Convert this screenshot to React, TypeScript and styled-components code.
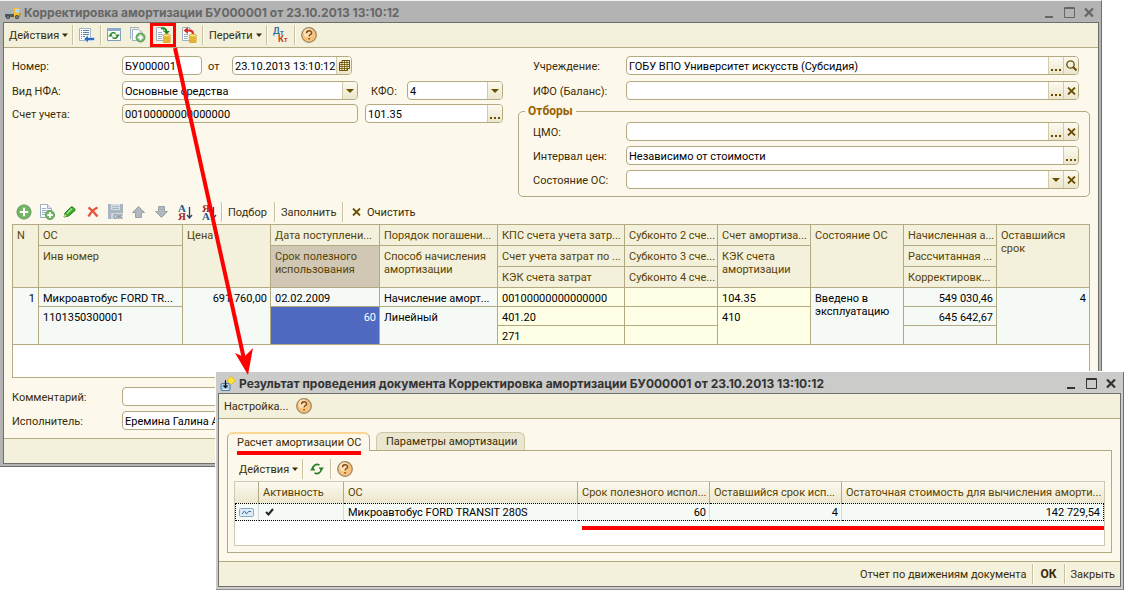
import React from "react";
import styled, { createGlobalStyle, css } from "styled-components";

const c = {
  line: "#b3aa82",
  bar: "#f3f0dc",
  body: "#fcf9ec",
  text: "#3b2c05",
  head: "#594304",
  brown: "#6b4e00",
  dark: "#6f6f6b",
  red: "#ff0000",
};

const Global = createGlobalStyle`
  *, *::before, *::after { box-sizing: border-box; }
  body { margin: 0; background: #fff; }
  body, button, input, select, table {
    font-family: Roboto, "Liberation Sans", sans-serif;
    font-size: 11px;
    line-height: 13px;
    color: ${c.text};
  }
  button { background: none; border: 0; padding: 0; margin: 0; }
  svg { display: block; flex: none; }
`;

/* ---------- windows ---------- */

const Desktop = styled.main`
  position: relative;
  display: grid;
  grid-template-columns: minmax(0, 1fr);
  align-items: start;
  min-width: 900px;
`;

const Window = styled.section<{ $active?: boolean }>`
  grid-area: 1 / 1;
  display: flex;
  flex-direction: column;
  background: ${(p) => (p.$active ? "#cbcbc9" : "#b3b3b3")};
  border-right: 1px solid ${c.dark};
  border-bottom: 1px solid ${(p) => (p.$active ? "#8d8d8b" : c.dark)};
  padding: 0 2px 2px ${(p) => (p.$active ? "2px" : "3px")};
  margin: ${(p) => (p.$active ? "372px 0 0 216px" : "0 22px 0 0")};
  ${(p) =>
    p.$active
      ? css`
          z-index: 2;
          box-shadow: -1px -1px 0 #fff;
        `
      : css`
          border-top: 1px solid #eef2ef;
        `}
`;

const TitleBar = styled.header<{ $active?: boolean }>`
  display: flex;
  align-items: center;
  gap: 3px;
  height: 21px;
  padding-left: 2px;
  padding-top: 2px;
  color: ${(p) => (p.$active ? "#333333" : "#666666")};
`;

const Title = styled.h1`
  flex: 1;
  margin: 0;
  font-family: Inter, Roboto, sans-serif;
  font-size: 12px;
  font-weight: 700;
  line-height: 14px;
  white-space: nowrap;
`;

const WinButtons = styled.div`
  display: flex;
  color: inherit;
`;

const WinButton = styled.button`
  width: 20px;
  height: 18px;
  display: grid;
  place-items: center;
  color: inherit;
`;

const Frame = styled.div`
  display: flex;
  flex-direction: column;
  background: ${c.body};
  border: 1px solid ${c.dark};
`;

const Bar = styled.div<{ $edge?: "bottom" | "top"; $end?: boolean; $gap?: number }>`
  display: flex;
  align-items: center;
  height: ${(p) => (p.$edge ? 25 : 24)}px;
  margin-top: ${(p) => p.$gap ?? 0}px;
  ${(p) => p.$edge && css`background: ${c.bar};`}
  ${(p) => p.$edge === "bottom" && css`border-bottom: 1px solid ${c.line};`}
  ${(p) => p.$edge === "top" && css`border-top: 1px solid ${c.line};`}
  ${(p) => p.$end && css`justify-content: flex-end;`}
`;

const Sep = styled.i`
  width: 2px;
  height: 20px;
  background: linear-gradient(90deg, #c9c2a0 50%, #fffef8 50%);
`;

const IconButton = styled.button<{ $w?: number }>`
  width: ${(p) => p.$w ?? 24}px;
  height: 24px;
  display: grid;
  place-items: center;
`;

const MarkedButton = styled(IconButton)`
  border: 3px solid ${c.red};
`;

const TextButton = styled.button<{ $w?: number; $bold?: boolean; $icon?: boolean }>`
  display: flex;
  align-items: center;
  gap: ${(p) => (p.$icon ? 6 : 3)}px;
  height: 24px;
  padding: 0 ${(p) => (p.$icon ? 8 : 5)}px;
  white-space: nowrap;
  ${(p) => p.$w && css`width: ${p.$w}px;`}
  ${(p) =>
    p.$bold &&
    css`
      font-size: 12px;
      font-weight: 700;
      justify-content: center;
    `}
`;

/* ---------- form ---------- */

const Content = styled.div`
  display: flex;
  flex-direction: column;
  padding: 8px;
`;

const FormGrid = styled.div`
  display: grid;
  grid-template-columns: 506px minmax(0, 1fr);
`;

const Row = styled.div<{ $gap?: number; $inset?: boolean }>`
  display: flex;
  align-items: center;
  height: 19px;
  margin-top: ${(p) => p.$gap ?? 0}px;
  ${(p) => p.$inset && css`padding: 0 11px 0 15px;`}
`;

const Label = styled.label<{ $w: number; $pl?: number }>`
  width: ${(p) => p.$w}px;
  padding: 1px 0 0 ${(p) => p.$pl ?? 0}px;
  flex: none;
  white-space: nowrap;
`;

const Field = styled.div<{ $w?: number; $muted?: boolean; $ml?: number }>`
  display: flex;
  height: 19px;
  ${(p) => (p.$w ? css`width: ${p.$w}px;` : css`flex: 1;`)}
  margin-left: ${(p) => p.$ml ?? 0}px;
  border: 1px solid ${c.line};
  border-radius: 4px;
  background: ${(p) => (p.$muted ? c.body : "#fff")};
  overflow: hidden;
`;

const control = css`
  flex: 1;
  min-width: 0;
  width: 0;
  height: 17px;
  border: 0;
  outline: 0;
  margin: 0;
  padding: 1px 0 0 2px;
  background: transparent;
  color: #000;
`;
const Input = styled.input`
  ${control}
`;
const Select = styled.select`
  ${control}
  appearance: none;
`;

const FieldButton = styled.button`
  width: 15px;
  height: 17px;
  display: grid;
  place-items: center;
  border-left: 1px solid #d3cba8;
  background: linear-gradient(#fcfaf0, #ece6cc);
`;

const Group = styled.fieldset`
  margin: 5px 0 0;
  padding: 4px 10px 7px 14px;
  min-width: 0;
  border: 1px solid ${c.line};
  border-radius: 5px;
`;

const Legend = styled.legend`
  margin-left: -8px;
  padding: 0 3px;
  height: 13px;
  font-size: 12px;
  font-weight: 700;
  color: #996000;
`;

/* ---------- main table ---------- */

const TableBox = styled.div`
  border: 1px solid ${c.line};
  background: #fff;
  padding-bottom: 32px;
`;

const Grid = styled.table`
  width: 100%;
  table-layout: fixed;
  border-collapse: separate;
  border-spacing: 0;
  tr > .last { border-right: 0; }
`;

const Th = styled.th<{ $sel?: boolean }>`
  height: 21px;
  padding: 4px 0 0 4px;
  border: solid ${c.line};
  border-width: 0 1px 1px 0;
  background: ${(p) => (p.$sel ? "#d0c8b4" : c.bar)};
  color: ${c.head};
  font-weight: 400;
  text-align: left;
  vertical-align: top;
  white-space: nowrap;
`;

const Td = styled.td<{ $bg?: "account" | "selected"; $num?: boolean }>`
  height: 19px;
  padding: 4px 3px 0 4px;
  border: solid ${c.line};
  border-width: 0 1px 1px 0;
  background: ${(p) =>
    p.$bg === "account" ? "#ffffe6" : p.$bg === "selected" ? "#5069c1" : "#f5faf7"};
  color: ${(p) => (p.$bg === "selected" ? "#fff" : "#000")};
  text-align: ${(p) => (p.$num ? "right" : "left")};
  vertical-align: top;
  white-space: nowrap;
`;

/* ---------- result window ---------- */

const Tabs = styled.div`
  display: flex;
  height: 19px;
  margin: 13px 8px 0;
  position: relative;
  z-index: 1;
`;

const Tab = styled.button<{ $on?: boolean }>`
  position: relative;
  height: ${(p) => (p.$on ? 19 : 18)}px;
  width: ${(p) => (p.$on ? 143 : 149)}px;
  margin-right: 6px;
  padding: 0 9px;
  text-align: ${(p) => (p.$on ? "left" : "center")};
  white-space: nowrap;
  border: 1px solid ${(p) => (p.$on ? c.line : "#cfc8a8")};
  border-top: ${(p) => (p.$on ? "2px solid #fbd592" : "1px solid #cfc8a8")};
  border-bottom: 0;
  border-radius: 6px 6px 0 0;
  background: ${(p) => (p.$on ? c.body : "#ebe6d0")};
`;

const TabMark = styled.i`
  position: absolute;
  left: 9px;
  right: 8px;
  top: 17px;
  height: 4px;
  background: ${c.red};
`;

const Panel = styled.div`
  margin: -1px 8px 8px;
  padding: 6px;
  border: 1px solid ${c.line};
`;

const ResultBox = styled.div`
  height: 65px;
  border: 1px solid #cdc9b3;
  background: #fff;
`;

const RTh = styled.th`
  height: 21px;
  padding: 0 0 0 4px;
  border-right: 1px solid ${c.line};
  background: linear-gradient(#fcfaf0, #ece6cc);
  color: ${c.head};
  font-weight: 400;
  text-align: left;
  white-space: nowrap;
`;

const RTd = styled.td<{ $num?: boolean; $tick?: boolean }>`
  height: 18px;
  padding: 0 3px 0 ${(p) => (p.$tick ? 6 : 4)}px;
  border-top: 1px dotted #000;
  border-bottom: 1px dotted #000;
  border-right: 1px solid #d5dbe0;
  background: #f5faf7;
  color: #000;
  text-align: ${(p) => (p.$num ? "right" : "left")};
  white-space: nowrap;
  &:first-child { border-left: 1px dotted #000; padding-left: 3px; }
  &:last-child { border-right: 1px dotted #000; }
`;

const ResultMark = styled.i`
  display: block;
  height: 4px;
  margin: 5px 0 0 347px;
  background: ${c.red};
`;

const Arrow = styled.svg`
  position: absolute;
  left: 170px;
  top: 47px;
  z-index: 3;
  pointer-events: none;
`;

/* ---------- icons ---------- */

const Svg = ({ children, w = 16, h = 16 }: { children: React.ReactNode; w?: number; h?: number }) => (
  <svg width={w} height={h} viewBox={`0 0 ${w} ${h}`} fill="none" aria-hidden="true">
    {children}
  </svg>
);

const Caret = ({ w = 6 }: { w?: number }) =>
  w === 6 ? (
    <Svg w={6} h={4}><path d="M0 .5h6L3 4z" fill={c.text} /></Svg>
  ) : (
    <Svg w={8} h={4}><path d="M0 0h8L4 4z" fill={c.brown} /></Svg>
  );
const Dots = () => (
  <Svg w={10} h={13}><path d="M0 10h2v2H0zM4 10h2v2H4zM8 10h2v2H8z" fill={c.brown} /></Svg>
);
const Cross = () => (
  <Svg w={9} h={8}><path d="M1 .5l7 7M8 .5l-7 7" stroke={c.brown} strokeWidth="1.800" /></Svg>
);
const Magnifier = () => (
  <Svg w={11} h={11}>
    <circle cx="4.500" cy="4.500" r="3.700" stroke={c.brown} strokeWidth="1.300" />
    <path d="M7 7l3.500 3.500" stroke={c.brown} strokeWidth="2" />
  </Svg>
);
const Calendar = () => (
  <Svg w={11} h={11}>
    <path d="M3 .5h7.500v8H8.500v2h-8v-8H3z" stroke={c.brown} fill="#fff8dc" />
    <path d="M.5 4.500h10M.5 6.500h10M.5 8.500h8M3 2.500h7.500M3 2v8.500M5.500.5v10M8 .5v10" stroke={c.brown} strokeWidth=".8" />
  </Svg>
);
const Truck = () => (
  <Svg w={16} h={14}>
    <path d="M0 8h9v3H0z" fill="#55595e" />
    <path d="M0 6h9v2H0z" fill="#9fb4c4" />
    <path d="M9 2h5.500v9H9z" fill="#f2c230" />
    <path d="M10 3h4v3.500h-4z" fill="#b8d8ef" />
    <path d="M14 7h1.500v4H14z" fill="#c4901c" />
    <circle cx="3" cy="11" r="2" fill="#3d4248" /><circle cx="12" cy="11" r="2" fill="#3d4248" />
    <circle cx="3" cy="11" r=".7" fill="#ccc" /><circle cx="12" cy="11" r=".7" fill="#ccc" />
  </Svg>
);
const ResultIcon = () => (
  <Svg>
    <rect x="1" y="7.500" width="9" height="7" rx="1" fill="#a9cdea" stroke="#4f7fa6" />
    <path d="M3 13.500h5" stroke="#e8f3fb" />
    <path d="M5.500 5v7M3.500 9.500l2 2 2-2" stroke="#111" strokeWidth="1.300" />
    <path d="M5 4.500h3" stroke="#222" strokeDasharray="1 1" />
    <path d="M11 .3l4.600 4.200L11 8.700 6.800 4.500z" fill="#ffe33a" stroke="#d3a820" strokeWidth=".7" />
  </Svg>
);
const ListArrow = () => (
  <Svg>
    <path d="M.5 1.500h11v12H.5z" fill="#fdfeff" stroke="#9fb6cc" />
    <path d="M2 3.500h1M4 3.500h6M2 5.500h1M4 5.500h6M2 7.500h1M4 7.500h6M2 9.500h1M4 9.500h2M2 11.500h1" stroke="#5f7f9f" />
    <path d="M5 12l4-4v2.500h6.500v3H9V16z" fill="#2b6bbd" stroke="#fff" strokeWidth=".5" />
  </Svg>
);
const WindowRefresh = () => (
  <Svg>
    <path d="M1.500 1.500h13v12h-13z" fill="#fdfeff" stroke="#7f9cb8" />
    <path d="M1 1h14v3H1z" fill="#8eabc7" />
    <path d="M4.500 8.500c0-3 3.500-3.500 5-2M11.500 8.500c0 3-3.500 3.500-5 2" stroke="#2c8a2c" strokeWidth="1.500" />
    <path d="M2 9.500h5L4.500 6.500zM9 7.500h5l-2.500 3z" fill="#2c8a2c" />
  </Svg>
);
const Page = () => (
  <>
    <path d="M1.500.5h7l4 4v9h-11z" fill="#fcfdfe" stroke="#9fb0c0" />
    <path d="M8.500.5v4h4" fill="#dfe8f0" stroke="#9fb0c0" />
  </>
);
const Plus = ({ x, y, r }: { x: number; y: number; r: number }) => (
  <>
    <circle cx={x} cy={y} r={r} fill="#74b566" stroke="#5c9a55" />
    <path d={`M${x - r * 0.6} ${y}h${r * 1.2}M${x} ${y - r * 0.6}v${r * 1.2}`} stroke="#fff" strokeWidth="2" />
  </>
);
const CopyDoc = () => (
  <Svg>
    <path d="M.5 12V.5h8.500" stroke="#9fb0c0" />
    <path d="M2.500 2.500h6l4 3v8h-10z" fill="#fcfdfe" stroke="#9fb0c0" />
    <Plus x={10.500} y={10.500} r={4.500} />
  </Svg>
);
const AddDoc = () => (
  <Svg>
    <Page />
    <path d="M3 4.500h4M3 6.500h7M3 8.500h4M3 10.500h3" stroke="#9ab2c8" />
    <Plus x={11} y={11} r={4.500} />
  </Svg>
);
const PlusIcon = () => <Svg><Plus x={8} y={8} r={7} /></Svg>;
const Coins = () => (
  <>
    <path d="M8 8.500v6c0 2 7.500 2 7.500 0v-6z" fill="#f5c945" />
    <ellipse cx="11.750" cy="8.500" rx="3.700" ry="1.500" fill="#ffe48a" stroke="#c58d13" strokeWidth=".7" />
    <path d="M8 10.500c0 2 7.500 2 7.500 0M8 12.500c0 2 7.500 2 7.500 0M8 14.300c0 2 7.500 2 7.500 0" stroke="#c58d13" strokeWidth=".7" />
  </>
);
const PostIcon = () => (
  <Svg>
    <Page />
    <path d="M3 5.500h4M3 7.500h5M3 9.500h4M3 11.500h4" stroke="#9ab2c8" />
    <path d="M6 1.500c3-.5 5 .5 5.500 3" stroke="#22852a" strokeWidth="2" />
    <path d="M8.500 4h6.500l-3.500 3.500z" fill="#22852a" />
    <Coins />
  </Svg>
);
const UnpostIcon = () => (
  <Svg>
    <Page />
    <path d="M3 7.500h4M3 9.500h4M3 11.500h4" stroke="#9ab2c8" />
    <path d="M5 3.500h3c3 0 4 1.500 4 4" stroke="#dd2a1c" strokeWidth="2" />
    <path d="M2.500 3.500L7 0v7z" fill="#dd2a1c" />
    <Coins />
  </Svg>
);
const DtKt = () => (
  <svg width="16" height="16" viewBox="0 0 16 16" aria-hidden="true" fontFamily="Roboto, sans-serif" fontWeight="700">
    <text x="0" y="7" fontSize="9" fill="#33719f">Д</text>
    <text x="7" y="8" fontSize="7" fill="#33719f">т</text>
    <text x="5" y="15" fontSize="9" fill="#cf3a24">К</text>
    <text x="11" y="15" fontSize="7" fill="#cf3a24">т</text>
  </svg>
);
const Help = () => (
  <svg width="16" height="16" viewBox="0 0 16 16" aria-hidden="true">
    <circle cx="8" cy="8" r="7.300" fill="#f9c27a" stroke="#9a8566" strokeWidth="1.200" />
    <circle cx="7" cy="6" r="4.500" fill="#fee0b4" />
    <path d="M5.600 6.200c0-3.400 5-3.200 5-.3 0 1.900-2.500 1.700-2.500 3.600M8.100 11v1.600" fill="none" stroke="#7d4a14" strokeWidth="1.500" />
  </svg>
);
const Pencil = () => (
  <Svg w={13} h={12}>
    <path d="M1 11l1-4 6-6c1-1 5 2 4 3.500L5.500 10z" fill="#3fae2c" stroke="#23801a" />
    <path d="M4 7.500L9 2.500" stroke="#a5e48e" strokeWidth="1.500" />
    <path d="M1 11l.7-3L4 10z" fill="#e9d9a8" />
  </Svg>
);
const RedCross = () => (
  <Svg w={12} h={12}><path d="M1.500 1.500c3 2 6 5 9 9M10.500 1.500c-4 2-7 5-9 9" stroke="#e8553f" strokeWidth="2.400" /></Svg>
);
const SaveOk = () => (
  <Svg>
    <path d="M0 0h15v15H0z" fill="#a9b6c2" />
    <path d="M3 0h9v6H3z" fill="#d5dde4" /><path d="M4 2.500h7M4 4.500h7" stroke="#a9b6c2" />
    <path d="M3 9h12v6H3z" fill="#d0d8df" />
    <text x="5" y="15" fontSize="7" fontWeight="700" fill="#8793a0">ОК</text>
  </Svg>
);
const ArrowUp = () => (
  <Svg w={13} h={12}><path d="M6.500.5l6 6h-3v5h-6v-5h-3z" fill="#b0b8be" stroke="#98a2aa" /></Svg>
);
const ArrowDown = () => (
  <Svg w={13} h={12}><path d="M6.500 11.500l6-6h-3v-5h-6v5h-3z" fill="#b0b8be" stroke="#98a2aa" /></Svg>
);
const Sort = ({ desc }: { desc?: boolean }) => (
  <svg width="16" height="17" viewBox="0 0 16 17" aria-hidden="true" fontFamily="Liberation Serif, serif" fontWeight="700" fontSize="11">
    <text x="1" y="8" fill={desc ? "#a3281e" : "#1e5f8c"}>{desc ? "Я" : "А"}</text>
    <text x="1" y="16" fill={desc ? "#1e5f8c" : "#a3281e"}>{desc ? "А" : "Я"}</text>
    <path d="M12.500 3v10M10 11l2.500 3 2.500-3" fill="none" stroke="#27455f" strokeWidth="1.300" />
  </svg>
);
const Refresh = () => (
  <Svg w={14} h={12}>
    <path d="M2.500 6.500C2.500 2.500 6 .5 9.500 2M11.500 5.500c0 4-3.500 6-7 4.500" stroke="#27802a" strokeWidth="1.700" />
    <path d="M0 7.500h5.500L2.700 4zM8.500 4.500H14L11.300 8z" fill="#27802a" />
  </Svg>
);
const RecordIcon = () => (
  <Svg w={15} h={9}>
    <rect x=".5" y=".5" width="14" height="8" rx="1" fill="#dcebf7" stroke="#8da9c2" />
    <path d="M3 6l2.500-3 2 3 2-2.500H12" stroke="#3c6c97" />
  </Svg>
);
const Tick = () => (
  <Svg w={9} h={8}><path d="M1 4l2.500 2.500L8 1" stroke="#222" strokeWidth="2" /></Svg>
);

const WindowControls = () => (
  <WinButtons>
    <WinButton aria-label="Свернуть"><Svg w={11} h={12}><path d="M1 9h8v2H1z" fill="currentColor" /></Svg></WinButton>
    <WinButton aria-label="Развернуть">
      <Svg w={11} h={11}><path d="M.5.5h10v10H.5zM0 1.500h11" stroke="currentColor" /></Svg>
    </WinButton>
    <WinButton aria-label="Закрыть окно">
      <Svg w={10} h={9}><path d="M1 .5l8 8M9 .5l-8 8" stroke="currentColor" strokeWidth="2.200" /></Svg>
    </WinButton>
  </WinButtons>
);

/* ---------- screens ---------- */

type ButtonKind = "dots" | "find" | "clear" | "caret";
const kinds: Record<ButtonKind, [string, React.ReactNode]> = {
  dots: ["Выбрать", <Dots />],
  find: ["Открыть", <Magnifier />],
  clear: ["Очистить поле", <Cross />],
  caret: ["Список", <Caret w={8} />],
};

const WideRow = (p: { id: string; label: string; value?: string; buttons: ButtonKind[]; gap?: number; inset?: boolean; labelWidth?: number }) => (
  <Row $gap={p.gap} $inset={p.inset}>
    <Label htmlFor={p.id} $w={p.labelWidth ?? 93}>{p.label}</Label>
    <Field>
      <Input id={p.id} defaultValue={p.value} />
      {p.buttons.map((b) => (
        <FieldButton key={b} aria-label={kinds[b][0]}>{kinds[b][1]}</FieldButton>
      ))}
    </Field>
  </Row>
);

const columns = [26, 144, 88, 109, 118, 127, 93, 93, 93, 93, 92];
const resultColumns = [24, 85, 234, 132, 132, 262];

const MainTable = () => (
  <TableBox>
    <Grid>
      <colgroup>{columns.map((w, i) => <col key={i} style={{ width: w }} />)}</colgroup>
      <thead>
        <tr>
          <Th rowSpan={3}>N</Th>
          <Th>ОС</Th>
          <Th rowSpan={3}>Цена</Th>
          <Th>Дата поступлени...</Th>
          <Th>Порядок погашени...</Th>
          <Th>КПС счета учета затр...</Th>
          <Th>Субконто 2 сче...</Th>
          <Th>Счет амортиза...</Th>
          <Th rowSpan={3}>Состояние ОС</Th>
          <Th>Начисленная а...</Th>
          <Th rowSpan={3} className="last">Оставшийся<br />срок</Th>
        </tr>
        <tr>
          <Th rowSpan={2}>Инв номер</Th>
          <Th rowSpan={2} $sel>Срок полезного<br />использования</Th>
          <Th rowSpan={2}>Способ начисления<br />амортизации</Th>
          <Th>Счет учета затрат по ...</Th>
          <Th>Субконто 3 сче...</Th>
          <Th rowSpan={2}>КЭК счета<br />амортизации</Th>
          <Th>Рассчитанная ...</Th>
        </tr>
        <tr>
          <Th>КЭК счета затрат</Th>
          <Th>Субконто 4 сче...</Th>
          <Th>Корректировк...</Th>
        </tr>
      </thead>
      <tbody>
        <tr>
          <Td rowSpan={3} $num>1</Td>
          <Td>Микроавтобус FORD TR...</Td>
          <Td rowSpan={3} $num>691 760,00</Td>
          <Td>02.02.2009</Td>
          <Td>Начисление аморт...</Td>
          <Td $bg="account">00100000000000000</Td>
          <Td $bg="account" />
          <Td $bg="account">104.35</Td>
          <Td rowSpan={3}>Введено в<br />эксплуатацию</Td>
          <Td $num>549 030,46</Td>
          <Td rowSpan={3} $num className="last">4</Td>
        </tr>
        <tr>
          <Td rowSpan={2}>1101350300001</Td>
          <Td rowSpan={2} $bg="selected" $num>60</Td>
          <Td rowSpan={2}>Линейный</Td>
          <Td $bg="account">401.20</Td>
          <Td $bg="account" />
          <Td rowSpan={2} $bg="account">410</Td>
          <Td $num>645 642,67</Td>
        </tr>
        <tr>
          <Td $bg="account">271</Td>
          <Td $bg="account" />
          <Td />
        </tr>
      </tbody>
    </Grid>
  </TableBox>
);

const DocumentWindow = () => (
  <Window>
    <TitleBar>
      <Truck />
      <Title>Корректировка амортизации БУ000001 от 23.10.2013 13:10:12</Title>
      <WindowControls />
    </TitleBar>
    <Frame>
      <Bar $edge="bottom">
        <TextButton $w={68}>Действия <Caret /></TextButton>
        <Sep />
        <IconButton $w={26} aria-label="Записать"><ListArrow /></IconButton>
        <Sep />
        <IconButton aria-label="Перечитать"><WindowRefresh /></IconButton>
        <IconButton aria-label="Скопировать"><CopyDoc /></IconButton>
        <MarkedButton $w={26} aria-label="Провести"><PostIcon /></MarkedButton>
        <IconButton $w={26} aria-label="Отменить проведение"><UnpostIcon /></IconButton>
        <Sep />
        <TextButton $w={62}>Перейти <Caret /></TextButton>
        <Sep />
        <IconButton $w={26} aria-label="Проводки"><DtKt /></IconButton>
        <Sep />
        <IconButton $w={26} aria-label="Справка"><Help /></IconButton>
      </Bar>
      <Content>
        <FormGrid>
          <div>
            <Row>
              <Label htmlFor="num" $w={110}>Номер:</Label>
              <Field $w={80}><Input id="num" defaultValue="БУ000001" /></Field>
              <Label htmlFor="date" $w={30} $pl={6}>от</Label>
              <Field $w={120}>
                <Input id="date" defaultValue="23.10.2013 13:10:12" />
                <FieldButton aria-label="Календарь"><Calendar /></FieldButton>
              </Field>
            </Row>
            <Row $gap={6}>
              <Label htmlFor="nfa" $w={110}>Вид НФА:</Label>
              <Field $w={236}>
                <Select id="nfa"><option>Основные средства</option></Select>
                <FieldButton aria-label="Список видов"><Caret w={8} /></FieldButton>
              </Field>
              <Label htmlFor="kfo" $w={49} $pl={13}>КФО:</Label>
              <Field $w={96}>
                <Select id="kfo"><option>4</option></Select>
                <FieldButton aria-label="Список КФО"><Caret w={8} /></FieldButton>
              </Field>
            </Row>
            <Row $gap={4}>
              <Label htmlFor="acc" $w={110}>Счет учета:</Label>
              <Field $w={236} $muted><Input id="acc" defaultValue="00100000000000000" /></Field>
              <Field $w={138} $ml={7}>
                <Input aria-label="Субсчет" defaultValue="101.35" />
                <FieldButton aria-label="Выбрать счет"><Dots /></FieldButton>
              </Field>
            </Row>
          </div>
          <div>
            <WideRow inset id="org" label="Учреждение:" value="ГОБУ ВПО Университет искусств (Субсидия)" buttons={["dots", "find"]} />
            <WideRow inset gap={6} id="ifo" label="ИФО (Баланс):" buttons={["dots", "clear"]} />
            <Group>
              <Legend>Отборы</Legend>
              <WideRow id="cmo" label="ЦМО:" buttons={["dots", "clear"]} />
              <WideRow gap={5} id="price" label="Интервал цен:" value="Независимо от стоимости" buttons={["dots"]} />
              <WideRow gap={5} id="state" label="Состояние ОС:" buttons={["caret", "clear"]} />
            </Group>
          </div>
        </FormGrid>
        <Bar $gap={3}>
          <IconButton $w={23} aria-label="Добавить"><PlusIcon /></IconButton>
          <IconButton $w={23} aria-label="Добавить копированием"><AddDoc /></IconButton>
          <IconButton $w={23} aria-label="Изменить"><Pencil /></IconButton>
          <IconButton $w={23} aria-label="Удалить"><RedCross /></IconButton>
          <IconButton $w={23} aria-label="Закончить редактирование"><SaveOk /></IconButton>
          <IconButton $w={23} aria-label="Вверх"><ArrowUp /></IconButton>
          <IconButton $w={23} aria-label="Вниз"><ArrowDown /></IconButton>
          <IconButton $w={23} aria-label="По возрастанию"><Sort /></IconButton>
          <IconButton $w={25} aria-label="По убыванию"><Sort desc /></IconButton>
          <Sep />
          <TextButton $w={51}>Подбор</TextButton>
          <Sep />
          <TextButton $w={66}>Заполнить</TextButton>
          <Sep />
          <TextButton $icon><Cross /> Очистить</TextButton>
        </Bar>
        <MainTable />
        <WideRow gap={9} labelWidth={110} id="comment" label="Комментарий:" buttons={[]} />
        <WideRow gap={5} labelWidth={110} id="person" label="Исполнитель:" value="Еремина Галина А" buttons={["dots", "clear"]} />
      </Content>
      <Bar $edge="top" />
    </Frame>
  </Window>
);

const ResultWindow = () => (
  <Window $active>
    <TitleBar $active>
      <ResultIcon />
      <Title as="h2">Результат проведения документа Корректировка амортизации БУ000001 от 23.10.2013 13:10:12</Title>
      <WindowControls />
    </TitleBar>
    <Frame>
      <Bar $edge="bottom">
        <TextButton $w={73}>Настройка...</TextButton>
        <IconButton aria-label="Справка"><Help /></IconButton>
      </Bar>
      <Tabs role="tablist">
        <Tab $on role="tab" aria-selected="true">Расчет амортизации ОС<TabMark /></Tab>
        <Tab role="tab" aria-selected="false">Параметры амортизации</Tab>
      </Tabs>
      <Panel>
        <Bar>
          <TextButton $w={68}>Действия <Caret /></TextButton>
          <Sep />
          <IconButton $w={26} aria-label="Обновить"><Refresh /></IconButton>
          <Sep />
          <IconButton $w={26} aria-label="Справка"><Help /></IconButton>
        </Bar>
        <ResultBox>
          <Grid>
            <colgroup>{resultColumns.map((w, i) => <col key={i} style={{ width: w }} />)}</colgroup>
            <thead>
              <tr>
                <RTh />
                <RTh>Активность</RTh>
                <RTh>ОС</RTh>
                <RTh>Срок полезного испол...</RTh>
                <RTh>Оставшийся срок исп...</RTh>
                <RTh className="last">Остаточная стоимость для вычисления аморти...</RTh>
              </tr>
            </thead>
            <tbody>
              <tr>
                <RTd><RecordIcon /></RTd>
                <RTd $tick><Tick /></RTd>
                <RTd>Микроавтобус FORD TRANSIT 280S</RTd>
                <RTd $num>60</RTd>
                <RTd $num>4</RTd>
                <RTd $num>142 729,54</RTd>
              </tr>
            </tbody>
          </Grid>
          <ResultMark />
        </ResultBox>
      </Panel>
      <Bar $edge="top" $end>
        <TextButton>Отчет по движениям документа</TextButton>
        <Sep />
        <TextButton $w={30} $bold>ОК</TextButton>
        <Sep />
        <TextButton>Закрыть</TextButton>
      </Bar>
    </Frame>
  </Window>
);

export default function App() {
  return (
    <>
      <Global />
      <Desktop>
        <DocumentWindow />
        <ResultWindow />
        <Arrow width="90" height="330" viewBox="0 0 90 330" aria-hidden="true">
          <path d="M5 1L74 312" stroke={c.red} strokeWidth="4" />
          <path d="M65 306l9 4 9-9-5 27z" fill={c.red} />
        </Arrow>
      </Desktop>
    </>
  );
}
